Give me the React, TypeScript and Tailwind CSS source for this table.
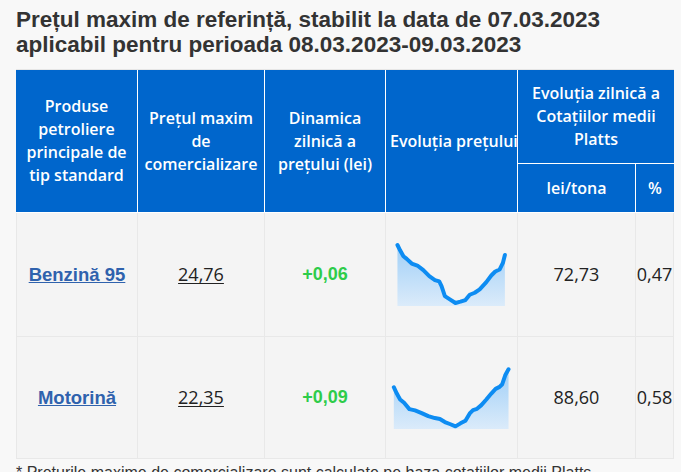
import React from "react";

type Pt = [number, number];

function Spark({
  pts,
  vb,
  bottom,
  w,
  h,
  id,
}: {
  pts: Pt[];
  vb: string;
  bottom: number;
  w: number;
  h: number;
  id: string;
}) {
  const line = pts.map((p) => p.join(",")).join(" ");
  const first = pts[0];
  const last = pts[pts.length - 1];
  const area = `${line} ${last[0]},${bottom} ${first[0]},${bottom}`;
  return (
    <svg width={w} height={h} viewBox={vb} className="mx-auto block overflow-visible">
      <defs>
        <linearGradient id={id} x1="0" y1="0" x2="0" y2="1">
          <stop offset="0%" stopColor="#9fcff7" />
          <stop offset="100%" stopColor="#dbebfa" />
        </linearGradient>
      </defs>
      <polygon points={area} fill={`url(#${id})`} />
      <polyline
        points={line}
        fill="none"
        stroke="#0d8cf2"
        strokeWidth={12}
        strokeLinejoin="round"
        strokeLinecap="round"
      />
    </svg>
  );
}

const chart1: Pt[] = [
  [172, 106], [180, 122], [190, 140], [200, 148], [215, 162], [232, 168], [250, 182],
  [268, 200], [285, 212], [298, 216], [305, 230], [315, 260], [330, 270], [347, 281],
  [362, 277], [377, 272], [390, 256], [405, 250], [420, 240], [440, 218], [455, 198],
  [467, 186], [480, 180], [490, 160], [496, 136],
];

const chart2: Pt[] = [
  [161, 531], [170, 550], [180, 568], [192, 578], [208, 597], [225, 601], [245, 609],
  [265, 618], [285, 624], [300, 627], [315, 636], [330, 642], [347, 649], [362, 640],
  [377, 632], [390, 610], [400, 600], [412, 596], [425, 585], [440, 568], [455, 550],
  [468, 536], [480, 530], [488, 522], [497, 495], [507, 477],
];

const th =
  "bg-[#0066cc] text-white font-semibold text-[16px] leading-[23px] text-center align-middle border-r border-b border-white px-1";
const td =
  "bg-[#f4f4f4] border-r border-b border-[#e8e8e8] text-center align-middle";

export default function App() {
  return (
    <div className="min-h-screen bg-[#f8f8f8] pl-4 pt-[7px] text-[#333]">
      <h2 className="font-['Liberation_Sans',Arial,sans-serif] text-[22.5px] font-bold leading-[25px] text-[#333]">
        Prețul maxim de referință, stabilit la data de 07.03.2023
        <br />
        aplicabil pentru perioada 08.03.2023-09.03.2023
      </h2>
      <div className="mt-[12px] w-[658px] overflow-hidden border-t border-[#e6e6e6]">
        <table className="w-[658px] table-fixed border-separate border-spacing-0 font-['Open_Sans',sans-serif]">
          <colgroup>
            <col className="w-[122px]" />
            <col className="w-[127px]" />
            <col className="w-[121px]" />
            <col className="w-[132px]" />
            <col className="w-[118px]" />
            <col className="w-[38px]" />
          </colgroup>
          <thead>
            <tr className="h-[94px]">
              <th rowSpan={2} className={th}>
                Produse petroliere principale de tip standard
              </th>
              <th rowSpan={2} className={th}>
                Prețul maxim de comercializare
              </th>
              <th rowSpan={2} className={th}>
                Dinamica zilnică a prețului (lei)
              </th>
              <th rowSpan={2} className={`${th} px-0 whitespace-nowrap`}>
                Evoluția prețului
              </th>
              <th colSpan={2} className={`${th} border-r-0 px-3`}>
                Evoluția zilnică a Cotațiilor medii Platts
              </th>
            </tr>
            <tr className="h-[49px]">
              <th className={th}>lei/tona</th>
              <th className={`${th} border-r-0 px-0`}>%</th>
            </tr>
          </thead>
          <tbody>
            <tr className="h-[124px]">
              <td className={`${td} border-l`}>
                <a
                  href="#"
                  className="font-['Liberation_Sans',Arial,sans-serif] text-[18.5px] font-bold text-[#2f62ad] underline"
                >
                  Benzină 95
                </a>
              </td>
              <td className={td}>
                <span className="text-[18px] text-[#222] underline underline-offset-2">24,76</span>
              </td>
              <td className={td}>
                <span className="font-['Liberation_Sans',Arial,sans-serif] text-[18px] font-bold text-[#2ecc4a]">
                  +0,06
                </span>
              </td>
              <td className={td}>
                <Spark pts={chart1} vb="172 100 326 190" bottom={290} w={109} h={63} id="g1" />
              </td>
              <td className={td}>
                <span className="text-[18px] text-[#222]">72,73</span>
              </td>
              <td className={`${td} whitespace-nowrap`}>
                <span className="text-[18px] text-[#222]">0,47</span>
              </td>
            </tr>
            <tr className="h-[122px]">
              <td className={`${td} border-l`}>
                <a
                  href="#"
                  className="font-['Liberation_Sans',Arial,sans-serif] text-[18.5px] font-bold text-[#2f62ad] underline"
                >
                  Motorină
                </a>
              </td>
              <td className={td}>
                <span className="text-[18px] text-[#222] underline underline-offset-2">22,35</span>
              </td>
              <td className={td}>
                <span className="font-['Liberation_Sans',Arial,sans-serif] text-[18px] font-bold text-[#2ecc4a]">
                  +0,09
                </span>
              </td>
              <td className={td}>
                <Spark pts={chart2} vb="160 470 350 187" bottom={657} w={117} h={62} id="g2" />
              </td>
              <td className={td}>
                <span className="text-[18px] text-[#222]">88,60</span>
              </td>
              <td className={`${td} whitespace-nowrap`}>
                <span className="text-[18px] text-[#222]">0,58</span>
              </td>
            </tr>
          </tbody>
        </table>
      </div>
      <p className="mt-[4px] font-['Liberation_Sans',Arial,sans-serif] text-[16px] leading-[20px] text-[#333]">
        * Prețurile maxime de comercializare sunt calculate pe baza cotațiilor medii Platts
      </p>
    </div>
  );
}
